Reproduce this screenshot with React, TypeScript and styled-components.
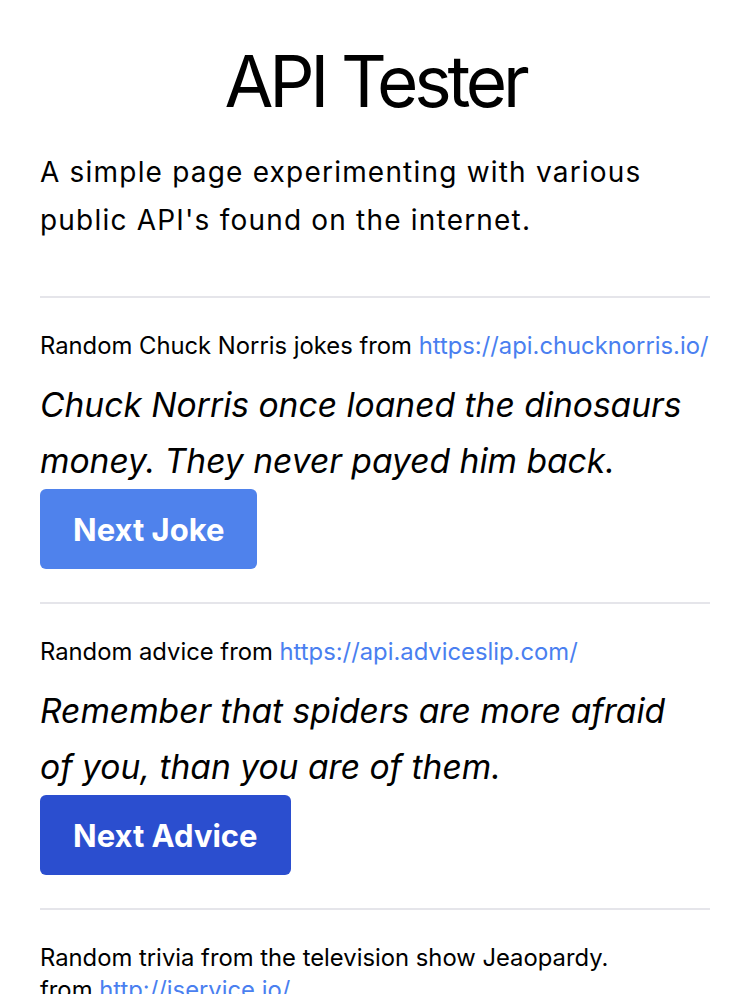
import React from "react";
import styled, { createGlobalStyle } from "styled-components";

const GlobalStyle = createGlobalStyle`
  html, body {
    margin: 0;
    padding: 0;
    background: #ffffff;
  }
  body {
    font-family: Inter, "Noto Sans", "Liberation Sans", sans-serif;
    color: #000000;
    -webkit-font-smoothing: antialiased;
  }
`;

const Page = styled.main`
  padding: 0 40px;
  display: flex;
  flex-direction: column;
`;

const Title = styled.h1`
  margin: 0;
  padding-top: 38px;
  font-size: 71px;
  line-height: 86px;
  font-weight: 400;
  letter-spacing: -4.2px;
  text-align: center;
`;

const Intro = styled.p`
  margin: 24px 0 52px;
  font-size: 28px;
  line-height: 48px;
  font-weight: 400;
  letter-spacing: 1.2px;
`;

const Section = styled.section`
  border-top: 2px solid #e5e5ea;
  padding: 32px 0 33px;
  display: flex;
  flex-direction: column;
  align-items: flex-start;
`;

const Source = styled.p`
  margin: 0 0 15px;
  font-size: 23.8px;
  line-height: 32px;
`;

const Link = styled.a`
  color: #4a7ff0;
  text-decoration: none;
`;

const Quote = styled.p`
  margin: 0;
  max-width: 650px;
  font-size: 33.6px;
  line-height: 56px;
  font-style: italic;
`;

const Button = styled.button<{ $tone: "light" | "dark" }>`
  height: 80px;
  padding: 0 33px;
  border: none;
  border-radius: 6px;
  background: ${(p) => (p.$tone === "light" ? "#4f82ec" : "#2b4ecf")};
  color: #ffffff;
  font-family: inherit;
  font-size: 31px;
  font-weight: 700;
  cursor: pointer;
`;

export default function App() {
  return (
    <>
      <GlobalStyle />
      <Page>
        <Title>API Tester</Title>
        <Intro>
          A simple page experimenting with various public API's found on the
          internet.
        </Intro>
        <Section>
          <Source>
            Random Chuck Norris jokes from{" "}
            <Link href="#">https://api.chucknorris.io/</Link>
          </Source>
          <Quote>
            Chuck Norris once loaned the dinosaurs money. They never payed him
            back.
          </Quote>
          <Button $tone="light">Next Joke</Button>
        </Section>
        <Section>
          <Source>
            Random advice from <Link href="#">https://api.adviceslip.com/</Link>
          </Source>
          <Quote>
            Remember that spiders are more afraid of you, than you are of them.
          </Quote>
          <Button $tone="dark">Next Advice</Button>
        </Section>
        <Section>
          <Source>
            Random trivia from the television show Jeaopardy.
            <br />
            from <Link href="#">http://jservice.io/</Link>
          </Source>
        </Section>
      </Page>
    </>
  );
}
